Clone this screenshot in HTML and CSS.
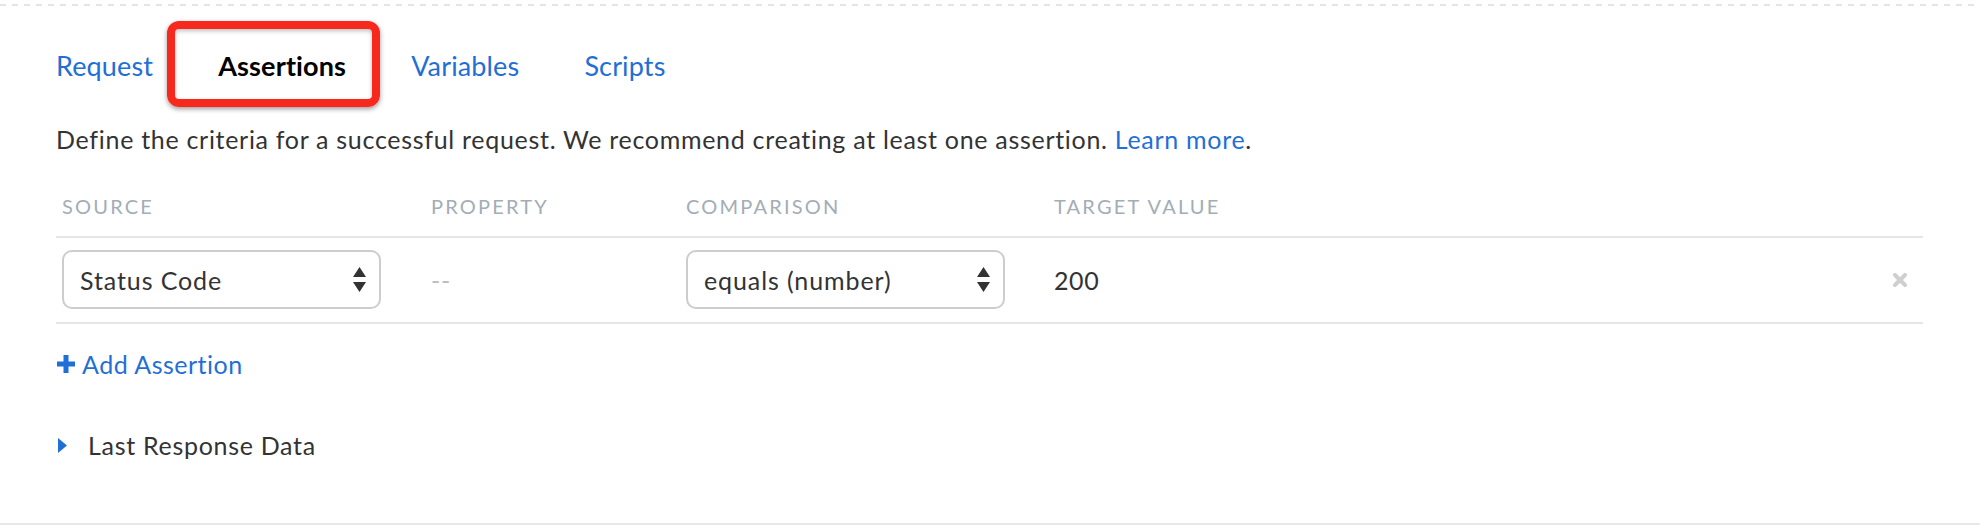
FILE: index.html
```html
<html>
<head>
    <title>Assertions</title>
    <link rel="stylesheet" href="styles.css">
</head>
<body>
  <div class="dash"></div>

  <div class="panel">
    <nav class="tabs">
      <a class="tab">Request</a>
      <a class="tab active">Assertions</a>
      <a class="tab">Variables</a>
      <a class="tab">Scripts</a>
    </nav>

    <p class="intro">Define the criteria for a successful request. We recommend creating at least one assertion. <a>Learn more</a>.</p>

    <table class="assertions">
      <colgroup>
        <col class="c-source">
        <col class="c-property">
        <col class="c-comparison">
        <col>
        <col class="c-remove">
      </colgroup>
      <thead>
        <tr>
          <th>Source</th>
          <th>Property</th>
          <th>Comparison</th>
          <th>Target Value</th>
          <th></th>
        </tr>
      </thead>
      <tbody>
        <tr>
          <td>
            <div class="select">
              <span>Status Code</span>
              <svg class="arrows" width="13" height="25" viewBox="0 0 13 25"><path d="M6.5 0 L13 10 L0 10 Z M0 15 L13 15 L6.5 25 Z" fill="#333"/></svg>
            </div>
          </td>
          <td class="empty">--</td>
          <td>
            <div class="select">
              <span>equals (number)</span>
              <svg class="arrows" width="13" height="25" viewBox="0 0 13 25"><path d="M6.5 0 L13 10 L0 10 Z M0 15 L13 15 L6.5 25 Z" fill="#333"/></svg>
            </div>
          </td>
          <td class="value">200</td>
          <td class="remove">
            <svg width="14" height="14" viewBox="0 0 14 14"><path d="M2 2 L12 12 M12 2 L2 12" stroke="#cfcfcf" stroke-width="4" stroke-linecap="round"/></svg>
          </td>
        </tr>
      </tbody>
    </table>

    <a class="add">
      <svg width="20" height="20" viewBox="0 0 20 20"><path d="M10 1 V19 M1 10 H19" stroke="#1f6fd6" stroke-width="5"/></svg>
      Add Assertion
    </a>

    <div class="last">
      <svg width="9" height="15" viewBox="0 0 9 15"><path d="M0 0 L9 7.5 L0 15 Z" fill="#1f6fd6"/></svg>
      Last Response Data
    </div>
  </div>

  <div class="bottom"></div>
</body>
</html>
```

FILE: styles.css
```css
    body {
        margin: 0;
        background: #fff;
        font-family: Lato, "Open Sans", sans-serif;
        color: #333;
    }

    .dash {
        margin-top: 4px;
        height: 2px;
        background: repeating-linear-gradient(90deg, #e4e4e4 0, #e4e4e4 6px, transparent 6px, transparent 12px);
    }

    .panel {
        padding: 0 57px 0 56px;
    }

    .tabs {
        display: flex;
        gap: 65px;
        margin-top: 40px;
        height: 40px;
        align-items: center;
    }

    .tab {
        font-size: 27px;
        letter-spacing: 0.15px;
        line-height: 40px;
        color: #1f6fd6;
    }

    .tab.active {
        position: relative;
        color: #000;
        font-weight: bold;
    }

    /* annotation box drawn round the active tab */
    .tab.active::after {
        content: "";
        position: absolute;
        top: -25px;
        bottom: -21px;
        left: -51px;
        right: -34px;
        border: 8px solid #f7291d;
        border-radius: 12px;
        box-shadow: 0 2px 5px rgba(0, 0, 0, 0.4), inset 0 2px 4px rgba(0, 0, 0, 0.25);
    }

    .intro {
        margin: 35px 0 0 0;
        font-size: 25px;
        letter-spacing: 0.7px;
        line-height: 36px;
    }

    .intro a {
        color: #1f6fd6;
    }

    table.assertions {
        margin-top: 34px;
        width: 100%;
        table-layout: fixed;
        border-collapse: collapse;
    }

    col.c-source { width: 369px; }
    col.c-property { width: 255px; }
    col.c-comparison { width: 368px; }
    col.c-remove { width: 60px; }

    table.assertions th {
        text-align: left;
        font-size: 20px;
        font-weight: normal;
        letter-spacing: 2.2px;
        text-transform: uppercase;
        color: #a3adb6;
        line-height: 30px;
        padding: 0 6px 15px 6px;
        border-bottom: 2px solid #e6e6e6;
    }

    table.assertions td {
        padding: 12px 6px 13px 6px;
        font-size: 25px;
        letter-spacing: 0.6px;
        border-bottom: 2px solid #e6e6e6;
    }

    .select {
        box-sizing: border-box;
        width: 319px;
        height: 59px;
        border: 2px solid #cdcdcd;
        border-radius: 10px;
        display: flex;
        align-items: center;
        justify-content: space-between;
        padding: 0 13px 0 16px;
        font-size: 25px;
        letter-spacing: 0.9px;
        color: #333;
    }

    table.assertions td.empty {
        color: #bdbdbd;
    }

    table.assertions td.remove {
        padding-right: 16px;
    }

    td.remove svg {
        display: block;
        margin-left: auto;
    }

    .add {
        display: flex;
        align-items: center;
        gap: 6px;
        margin-top: 25px;
        font-size: 25px;
        letter-spacing: 0.5px;
        line-height: 30px;
        color: #1f6fd6;
    }

    .last {
        display: flex;
        align-items: center;
        gap: 21px;
        margin-top: 51px;
        padding-left: 2px;
        font-size: 25px;
        letter-spacing: 0.7px;
        line-height: 30px;
    }

    .bottom {
        margin-top: 63px;
        height: 2px;
        background: #e8e8e8;
    }
```
